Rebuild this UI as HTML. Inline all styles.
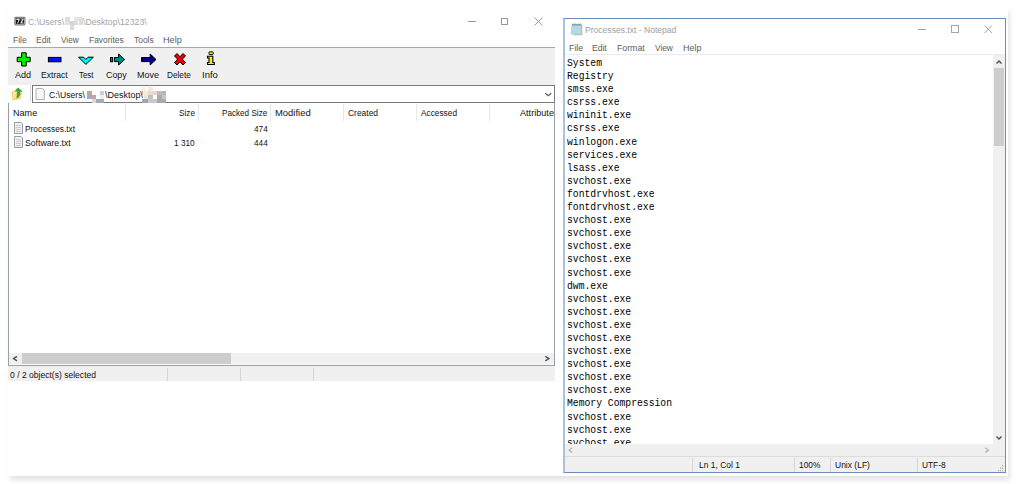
<!DOCTYPE html>
<html><head><meta charset="utf-8">
<style>
*{margin:0;padding:0;box-sizing:border-box}
html,body{width:1016px;height:484px;overflow:hidden;background:#fff;position:relative}
body{font-family:"Liberation Sans",sans-serif}
.a{position:absolute}
.t{position:absolute;white-space:pre;font-size:11px;line-height:12px;transform:scaleX(0.83);transform-origin:0 0}
.t.r{transform-origin:100% 0}
.mono{position:absolute;font-family:"Liberation Mono",monospace;font-size:11px;line-height:13.1px;white-space:pre;color:#000;transform:scaleX(0.884);transform-origin:0 0}
</style></head><body>
<div class="a" style="left:8px;top:8px;width:1000px;height:468px;background:#fff;box-shadow:2px 4px 5px rgba(0,0,0,0.11)"></div>
<svg class="a" style="left:12px;top:14px" width="16" height="14" viewBox="0 0 16 14"><rect x="2.3" y="2.8" width="11.2" height="8.6" rx="1.3" fill="#7c7c7c"/><rect x="3.4" y="3.9" width="9" height="6.4" fill="#d8d8d8"/><rect x="3.8" y="4.3" width="8.2" height="5.6" fill="#111"/><path d="M4.3 4.8H7.8V5.6L6 9.4H5L6.4 5.9H4.3Z" fill="#fff" opacity="0.85"/><path d="M8.6 4.8H11.6V5.7L9.9 8.6H11.6V9.4H8.4V8.5L10.1 5.6H8.6Z" fill="#fff" opacity="0.85"/></svg>
<div class="t" style="left:28.41px;top:15px;color:#a4a4a4;transform:scale(0.7867,0.9);transform-origin:0 10px;">C:\Users\</div>
<div class="a" style="left:65px;top:17px;width:5px;height:4px;background:#dedede;"></div>
<div class="a" style="left:74px;top:17px;width:4.5px;height:4px;background:#e0e6ea;"></div>
<div class="a" style="left:78.5px;top:17px;width:4.5px;height:4px;background:#e6dedb;"></div>
<div class="a" style="left:65px;top:21px;width:5px;height:4px;background:#e8e2de;"></div>
<div class="a" style="left:70px;top:21px;width:4.2px;height:4px;background:#d6d4da;"></div>
<div class="a" style="left:74.2px;top:21px;width:4.3px;height:4px;background:#dadee0;"></div>
<div class="a" style="left:78.5px;top:21px;width:4.5px;height:4px;background:#d8dcd8;"></div>
<div class="a" style="left:70px;top:25px;width:4.2px;height:4.5px;background:#d8dce2;"></div>
<div class="t" style="left:83.00px;top:15px;color:#a4a4a4;transform:scale(0.7950,0.9);transform-origin:0 10px;">\Desktop\12323\</div>
<div class="a" style="left:468px;top:21px;width:8px;height:1px;background:#999;"></div>
<div class="a" style="left:501px;top:18px;width:7px;height:7px;border:1px solid #999"></div>
<svg class="a" style="left:534px;top:17px" width="9" height="9"><path d="M0.5 0.5L8.5 8.5M8.5 0.5L0.5 8.5" stroke="#999" stroke-width="1"/></svg>
<div class="t" style="left:12.93px;top:33px;color:#5c5c5c;transform:scale(0.7688,0.9);transform-origin:0 10px;">File</div>
<div class="t" style="left:35.82px;top:33px;color:#5c5c5c;transform:scale(0.7778,0.9);transform-origin:0 10px;">Edit</div>
<div class="t" style="left:61.00px;top:33px;color:#5c5c5c;transform:scale(0.7500,0.9);transform-origin:0 10px;">View</div>
<div class="t" style="left:88.93px;top:33px;color:#5c5c5c;transform:scale(0.7659,0.9);transform-origin:0 10px;">Favorites</div>
<div class="t" style="left:134.00px;top:33px;color:#5c5c5c;transform:scale(0.7680,0.9);transform-origin:0 10px;">Tools</div>
<div class="t" style="left:163.07px;top:33px;color:#5c5c5c;transform:scale(0.8286,0.9);transform-origin:0 10px;">Help</div>
<div class="a" style="left:8px;top:47px;width:547px;height:1px;background:#a8a8a8;"></div>
<div class="a" style="left:8px;top:48px;width:547px;height:37px;background:#f0f0f0;"></div>
<div class="t" style="left:15.30px;top:68px;color:#111;transform:scale(0.8263,0.9);transform-origin:0 10px;">Add</div>
<div class="t" style="left:41.02px;top:68px;color:#111;transform:scale(0.7818,0.9);transform-origin:0 10px;">Extract</div>
<div class="t" style="left:78.80px;top:68px;color:#111;transform:scale(0.7100,0.9);transform-origin:0 10px;">Test</div>
<div class="t" style="left:106.20px;top:68px;color:#111;transform:scale(0.8040,0.9);transform-origin:0 10px;">Copy</div>
<div class="t" style="left:136.88px;top:68px;color:#111;transform:scale(0.8192,0.9);transform-origin:0 10px;">Move</div>
<div class="t" style="left:167.05px;top:68px;color:#111;transform:scale(0.7484,0.9);transform-origin:0 10px;">Delete</div>
<div class="t" style="left:202.14px;top:68px;color:#111;transform:scale(0.8647,0.9);transform-origin:0 10px;">Info</div>
<div class="a" style="left:30px;top:85px;width:1px;height:17px;background:#d8d8d8;"></div>
<div class="a" style="left:32px;top:85px;width:523px;height:17px;background:#fff;border:1px solid #7a7a7a;height:18px"></div>
<div class="t" style="left:49.22px;top:88px;color:#111;transform:scale(0.7822,0.9);transform-origin:0 10px;">C:\Users\</div>
<div class="t" style="left:104.70px;top:88px;color:#111;transform:scale(0.8149,0.9);transform-origin:0 10px;">\Desktop\</div>
<div class="a" style="left:87px;top:91px;width:5px;height:4px;background:#c9a39a;"></div>
<div class="a" style="left:100.4px;top:91px;width:3.8px;height:4px;background:#d2cad4;"></div>
<div class="a" style="left:87px;top:95px;width:5px;height:4.3px;background:#a3abc9;"></div>
<div class="a" style="left:92px;top:95px;width:4px;height:4.3px;background:#c9a39a;"></div>
<div class="a" style="left:100.4px;top:95px;width:3.8px;height:4.3px;background:#e2f2f8;"></div>
<div class="a" style="left:92px;top:99.3px;width:4px;height:3.7px;background:#d8d8d8;"></div>
<div class="a" style="left:96px;top:99.3px;width:8.2px;height:3.7px;background:#a9a9b1;"></div>
<div class="a" style="left:142.3px;top:87px;width:3.7px;height:4px;background:#fbeee8;"></div>
<div class="a" style="left:148.3px;top:87px;width:4.3px;height:4px;background:#f2e8dc;"></div>
<div class="a" style="left:142.3px;top:91px;width:1.2px;height:4px;background:#cf9fb5;"></div>
<div class="a" style="left:143.5px;top:91px;width:4.8px;height:4px;background:#f4ecd2;"></div>
<div class="a" style="left:148.3px;top:91px;width:4.3px;height:4px;background:#e8dcd4;"></div>
<div class="a" style="left:152.6px;top:91px;width:4.4px;height:4px;background:#e4d6c6;"></div>
<div class="a" style="left:157px;top:91px;width:4.5px;height:4px;background:#b9bdc8;"></div>
<div class="a" style="left:161.5px;top:91px;width:4.2px;height:4px;background:#bab2ba;"></div>
<div class="a" style="left:143.5px;top:95px;width:4.8px;height:4.3px;background:#e8eadc;"></div>
<div class="a" style="left:148.3px;top:95px;width:4.3px;height:4.3px;background:#cabeb6;"></div>
<div class="a" style="left:157px;top:95px;width:4.5px;height:4.3px;background:#aaaea2;"></div>
<div class="a" style="left:161.5px;top:95px;width:4.2px;height:4.3px;background:#c2c6d2;"></div>
<div class="a" style="left:142.3px;top:99.3px;width:6px;height:3.7px;background:#a2a6aa;"></div>
<div class="a" style="left:148.3px;top:99.3px;width:8.7px;height:3.7px;background:#cacace;"></div>
<div class="a" style="left:157px;top:99.3px;width:8.7px;height:3.7px;background:#aaaaae;"></div>
<svg class="a" style="left:0;top:0" width="1016" height="484" viewBox="0 0 1016 484"><path d="M545.2 93.2L548.3 95.8L551.2 93.2" stroke="#5a5a5a" fill="none" stroke-width="1.2"/></svg>
<div class="a" style="left:8px;top:103px;width:547px;height:263px;border:1px solid #9a9ea6;border-top:none;background:#fff"></div>
<div class="t" style="left:13.08px;top:106px;color:#111;transform:scale(0.8250,0.9);transform-origin:0 10px;">Name</div>
<div class="t" style="left:178.75px;top:106px;color:#111;transform:scale(0.7450,0.9);transform-origin:0 10px;">Size</div>
<div class="t" style="left:221.86px;top:106px;color:#111;transform:scale(0.7400,0.9);transform-origin:0 10px;">Packed Size</div>
<div class="t" style="left:275.04px;top:106px;color:#111;transform:scale(0.8575,0.9);transform-origin:0 10px;">Modified</div>
<div class="t" style="left:348.13px;top:106px;color:#111;transform:scale(0.7684,0.9);transform-origin:0 10px;">Created</div>
<div class="t" style="left:421.10px;top:106px;color:#111;transform:scale(0.7553,0.9);transform-origin:0 10px;">Accessed</div>
<div class="t" style="left:520.00px;top:106px;color:#111;transform:scale(0.8293,0.9);transform-origin:0 10px;">Attribute</div>
<div class="a" style="left:125px;top:104px;width:1px;height:17px;background:#e8e8e8;"></div>
<div class="a" style="left:198px;top:104px;width:1px;height:17px;background:#e8e8e8;"></div>
<div class="a" style="left:270px;top:104px;width:1px;height:17px;background:#e8e8e8;"></div>
<div class="a" style="left:343px;top:104px;width:1px;height:17px;background:#e8e8e8;"></div>
<div class="a" style="left:416px;top:104px;width:1px;height:17px;background:#e8e8e8;"></div>
<div class="a" style="left:489px;top:104px;width:1px;height:17px;background:#e8e8e8;"></div>
<div class="t" style="left:24.94px;top:122px;color:#111;transform:scale(0.7585,0.9);transform-origin:0 10px;">Processes.txt</div>
<div class="t" style="left:253.50px;top:122px;color:#111;transform:scale(0.7500,0.9);transform-origin:0 10px;">474</div>
<div class="t" style="left:25.11px;top:136px;color:#111;transform:scale(0.7877,0.9);transform-origin:0 10px;">Software.txt</div>
<div class="t" style="left:174.15px;top:136px;color:#111;transform:scale(0.7500,0.9);transform-origin:0 10px;">1 310</div>
<div class="t" style="left:253.50px;top:136px;color:#111;transform:scale(0.7500,0.9);transform-origin:0 10px;">444</div>
<svg class="a" style="left:0;top:0" width="240" height="160" viewBox="0 0 240 160"><path d="M21.6 52.8H26.2V57.3H30.2V61.7H26.2V66H21.6V61.7H17.2V57.3H21.6Z" fill="#00f000" stroke="#000" stroke-width="1"/><rect x="48.4" y="57.4" width="12.6" height="4.4" fill="#0010f0" stroke="#000" stroke-width="1"/><path d="M78.6 57.2H83.6L85.8 59.5L88 57.2H93.4L85.8 64.4Z" fill="#00f0f0" stroke="#000" stroke-width="1"/><rect x="110.5" y="57.5" width="2.2" height="4.2" fill="#008a8a" stroke="#000" stroke-width="1"/><path d="M114.5 57.5H118.6V54L124.6 59.5L118.6 65V61.6H114.5Z" fill="#008a8a" stroke="#000" stroke-width="1"/><path d="M141.5 57.5H150.2V54L156 59.5L150.2 65V61.6H141.5Z" fill="#000090" stroke="#000" stroke-width="1"/><path d="M174.5 56L177 53.5L180 56.8L183 53.5L185.5 56L182.3 59.2L185.5 62.5L183 65L180 61.7L177 65L174.5 62.5L177.7 59.2Z" fill="#f00000" stroke="#000" stroke-width="1"/><rect x="209" y="51.8" width="4.2" height="2.8" rx="0.8" fill="#f0f000" stroke="#000" stroke-width="1"/><path d="M207.5 56.2H212.8V62.5H214.3V64.5H207.5V62.5H209V58H207.5Z" fill="#f0f000" stroke="#000" stroke-width="1.1"/><path d="M12 91.5L16.8 91L17.2 99L12.4 100Z" fill="#f2c95c"/><path d="M12.9 92.4L16 92.1L16.2 98.4L13.2 99Z" fill="#fdf0a8"/><path d="M15.2 94L21.9 93.1L19.9 99L13.3 99.9Z" fill="#f0c448" opacity="0.9"/><path d="M14.8 95L18 94.6L17.5 98.8L14 99.3Z" fill="#fbe9a0" opacity="0.8"/><path d="M16.6 98C19.6 96.6 20.4 94 20 91.3L22.2 91.6L18 87.8L15.2 90.9L17.4 91C17.6 93.6 17.4 95.6 16.6 98Z" fill="#38ac38" stroke="#1f8a1f" stroke-width="0.5"/><path d="M36 88.5H42.5L44.3 90.3V99.5H36Z" fill="#f7f7f7" stroke="#b0b0b0" stroke-width="1"/><path d="M14.5 122.5H21L22.5 124V133.5H14.5Z" fill="#f2f2f2" stroke="#9a9a9a" stroke-width="1"/><path d="M16 125.5H21M16 127.5H21M16 129.5H21M16 131.5H21" stroke="#c4c4c4" stroke-width="0.9"/><path d="M14.5 136.5H21L22.5 138V147.5H14.5Z" fill="#f2f2f2" stroke="#9a9a9a" stroke-width="1"/><path d="M16 139.5H21M16 141.5H21M16 143.5H21M16 145.5H21" stroke="#c4c4c4" stroke-width="0.9"/></svg>
<div class="a" style="left:9px;top:353px;width:545px;height:11px;background:#f0f0f0;"></div>
<div class="a" style="left:22px;top:353px;width:209px;height:11px;background:#cdcdcd;"></div>
<div class="a" style="left:9px;top:364px;width:545px;height:1px;background:#fafafa;"></div>
<svg class="a" style="left:0;top:0" width="1016" height="484" viewBox="0 0 1016 484"><path d="M17 356.3L13.6 358.6L17 360.8" stroke="#555" fill="none" stroke-width="1.5"/><path d="M545.3 356.3L548.9 358.6L545.3 360.8" stroke="#555" fill="none" stroke-width="1.5"/></svg>
<div class="a" style="left:8px;top:366px;width:547px;height:15px;background:#f0f0f0;"></div>
<div class="t" style="left:9.50px;top:368px;color:#111;transform:scale(0.7773,0.9);transform-origin:0 10px;">0 / 2 object(s) selected</div>
<div class="a" style="left:167px;top:368px;width:1px;height:13px;background:#d6d6d6;"></div>
<div class="a" style="left:240px;top:368px;width:1px;height:13px;background:#d6d6d6;"></div>
<div class="a" style="left:313px;top:368px;width:1px;height:13px;background:#d6d6d6;"></div>
<div class="a" style="left:563px;top:18px;width:443px;height:455px;border:1px solid #6d8bbb;border-left:2px solid #a9c3dc;background:#fff"></div>
<div class="t" style="left:584.92px;top:23px;color:#a0a0a0;transform:scale(0.7784,0.9);transform-origin:0 10px;">Processes.txt - Notepad</div>
<div class="a" style="left:918px;top:29px;width:8px;height:1px;background:#a4a4a4;"></div>
<div class="a" style="left:951px;top:25px;width:8px;height:8px;border:1px solid #a4a4a4"></div>
<svg class="a" style="left:984px;top:25px" width="9" height="9"><path d="M0.5 0.5L8 8M8 0.5L0.5 8" stroke="#a4a4a4" stroke-width="1"/></svg>
<svg class="a" style="left:569px;top:22px" width="16" height="15" viewBox="0 0 16 15"><path d="M3.5 3H13.3V13.3H4.5Z" fill="#c9b58a"/><path d="M2.5 2.8H12.5V12.5H1.8Z" fill="#a6d6e2"/><path d="M3.5 4H11.5V11.5H3Z" fill="#b8dde8" opacity="0.7"/><path d="M3 2.2H12.5V3.4H3Z" fill="#7c8a90"/><path d="M4 1.2V2.5M6.5 1.2V2.5M9 1.2V2.5M11.5 1.2V2.5" stroke="#9aa" stroke-width="0.8"/></svg>
<div class="t" style="left:569.10px;top:41px;color:#5c5c5c;transform:scale(0.8000,0.9);transform-origin:0 10px;">File</div>
<div class="t" style="left:592.22px;top:41px;color:#5c5c5c;transform:scale(0.7778,0.9);transform-origin:0 10px;">Edit</div>
<div class="t" style="left:616.91px;top:41px;color:#5c5c5c;transform:scale(0.7941,0.9);transform-origin:0 10px;">Format</div>
<div class="t" style="left:655.40px;top:41px;color:#5c5c5c;transform:scale(0.7542,0.9);transform-origin:0 10px;">View</div>
<div class="t" style="left:683.09px;top:41px;color:#5c5c5c;transform:scale(0.8143,0.9);transform-origin:0 10px;">Help</div>
<div class="a" style="left:565px;top:54px;width:440px;height:1px;background:#ececec;"></div>
<div class="a" style="left:565px;top:55px;width:428px;height:389px;overflow:hidden"><div class="mono" style="left:2px;top:2px">System
Registry
smss.exe
csrss.exe
wininit.exe
csrss.exe
winlogon.exe
services.exe
lsass.exe
svchost.exe
fontdrvhost.exe
fontdrvhost.exe
svchost.exe
svchost.exe
svchost.exe
svchost.exe
svchost.exe
dwm.exe
svchost.exe
svchost.exe
svchost.exe
svchost.exe
svchost.exe
svchost.exe
svchost.exe
svchost.exe
Memory Compression
svchost.exe
svchost.exe
svchost.exe</div></div>
<div class="a" style="left:993px;top:55px;width:12px;height:401px;background:#f0f0f0;"></div>
<div class="a" style="left:994px;top:68px;width:10px;height:78px;background:#cdcdcd;"></div>
<div class="a" style="left:565px;top:444px;width:440px;height:12px;background:#f0f0f0;"></div>
<div class="a" style="left:565px;top:456px;width:440px;height:1px;background:#dcdcdc;"></div>
<div class="a" style="left:565px;top:457px;width:440px;height:15px;background:#f0f0f0;"></div>
<div class="a" style="left:692px;top:458px;width:1px;height:14px;background:#d6d6d6;"></div>
<div class="a" style="left:794px;top:458px;width:1px;height:14px;background:#d6d6d6;"></div>
<div class="a" style="left:830px;top:458px;width:1px;height:14px;background:#d6d6d6;"></div>
<div class="a" style="left:917px;top:458px;width:1px;height:14px;background:#d6d6d6;"></div>
<div class="t" style="left:698.63px;top:458px;color:#111;transform:scale(0.7692,0.9);transform-origin:0 10px;">Ln 1, Col 1</div>
<div class="t" style="left:798.54px;top:458px;color:#111;transform:scale(0.7593,0.9);transform-origin:0 10px;">100%</div>
<div class="t" style="left:834.73px;top:458px;color:#111;transform:scale(0.7727,0.9);transform-origin:0 10px;">Unix (LF)</div>
<div class="t" style="left:922.24px;top:458px;color:#111;transform:scale(0.7567,0.9);transform-origin:0 10px;">UTF-8</div>
<svg class="a" style="left:0;top:0" width="1016" height="484" viewBox="0 0 1016 484"><path d="M996.5 63.5L999 61L1001.5 63.5" stroke="#555" fill="none" stroke-width="1.5"/><path d="M996.5 436.5L999 439L1001.5 436.5" stroke="#555" fill="none" stroke-width="1.5"/><path d="M572.2 447.8L569 450.2L572.2 452.6" stroke="#b4b4b4" fill="none" stroke-width="1.3"/><path d="M985.2 447.8L988.4 450.2L985.2 452.6" stroke="#b4b4b4" fill="none" stroke-width="1.3"/><path d="M1002 465h1.2v1.5h-1.2zM1002 467.5h1.2v1.5h-1.2zM1000 467.5h1.2v1.5h-1.2zM1002 470h1.2v1.2h-1.2zM1000 470h1.2v1.2h-1.2zM998 470h1.2v1.2h-1.2z" fill="#b4b4b4"/></svg>
</body></html>
